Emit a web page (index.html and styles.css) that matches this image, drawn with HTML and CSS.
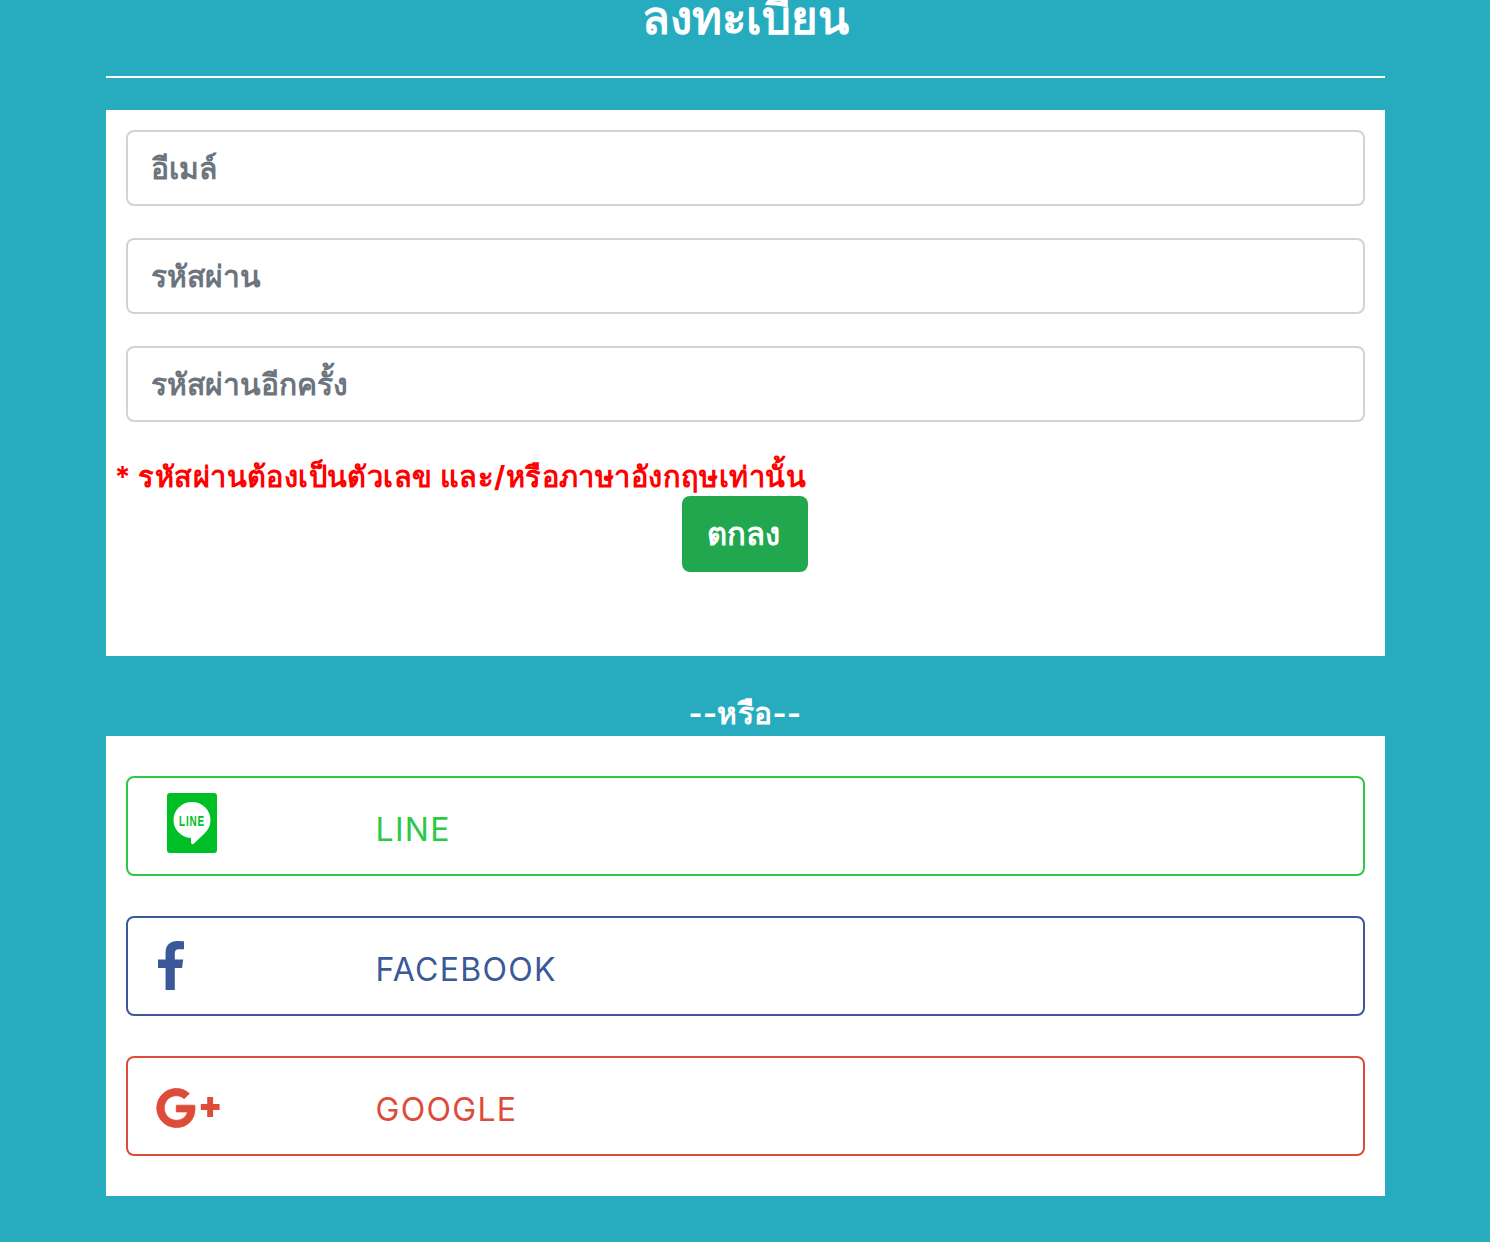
FILE: index.html
```html
<!DOCTYPE html>
<html lang="th">
<head>
    <meta charset="UTF-8">
    <meta name="viewport" content="width=device-width, initial-scale=1.0">
    <title>ลงทะเบียน</title>
    <link rel="stylesheet" href="styles.css">
</head>
<body>
<div class="container">
    <h1 class="title">ลงทะเบียน</h1>
    <hr class="divider">
    <form class="card register">
        <input class="field" type="text" placeholder="อีเมล์">
        <input class="field" type="password" placeholder="รหัสผ่าน">
        <input class="field" type="password" placeholder="รหัสผ่านอีกครั้ง">
        <p class="note">* รหัสผ่านต้องเป็นตัวเลข และ/หรือภาษาอังกฤษเท่านั้น</p>
        <button class="submit" type="button">ตกลง</button>
    </form>
    <div class="or">--หรือ--</div>
    <div class="card social">
        <a class="social-btn line" href="#">
            <span class="social-icon">
                <svg class="icon-line" width="50" height="60" viewBox="0 0 50 60">
                    <rect width="50" height="60" rx="3" fill="#00bf26"/>
                    <ellipse cx="25" cy="27" rx="18.5" ry="18" fill="#fff"/>
                    <path d="M24 43 L24 50 Q25 52 27 50.5 L38 40 Z" fill="#fff"/>
                    <text class="line-word" x="12" y="33" textLength="26" lengthAdjust="spacingAndGlyphs">LINE</text>
                </svg>
            </span>
            <span class="social-label">LINE</span>
        </a>
        <a class="social-btn facebook" href="#">
            <span class="social-icon">
                <svg class="icon-fb" width="26" height="49" viewBox="0 0 264 512" preserveAspectRatio="none">
                    <path fill="currentColor" d="M76.7 512V283H0v-91h76.7v-71.7C76.7 42.4 124.3 0 193.8 0c33.3 0 61.9 2.5 70.2 3.6V85h-48.2c-37.8 0-45.1 18-45.1 44.3V192H256l-11.7 91h-73.6v229"/>
                </svg>
            </span>
            <span class="social-label">FACEBOOK</span>
        </a>
        <a class="social-btn google" href="#">
            <span class="social-icon">
                <svg class="icon-g" width="66" height="52" viewBox="0 0 640 512">
                    <path fill="currentColor" stroke="currentColor" stroke-width="8" d="M386.061 228.496c1.834 9.692 3.143 19.384 3.143 31.956C389.204 370.205 315.599 448 204.8 448c-106.084 0-192-85.915-192-192s85.916-192 192-192c51.864 0 95.083 18.859 128.611 50.292l-52.126 50.03c-14.145-13.621-39.028-29.599-76.485-29.599-65.484 0-118.92 54.221-118.92 121.277 0 67.056 53.436 121.277 118.92 121.277 75.961 0 104.513-54.745 108.965-82.773H204.8v-66.009h181.261z"/>
                    <path fill="currentColor" d="M446 217h63v-69h58v69h64v58h-64v69h-58v-69h-63z"/>
                </svg>
            </span>
            <span class="social-label">GOOGLE</span>
        </a>
    </div>
</div>
</body>
</html>
```

FILE: styles.css
```css
html, body {
    margin: 0;
    height: 1242px;
    overflow: hidden;
}
body {
    font-family: Inter, "Noto Sans", sans-serif;
    background-color: #27abbf;
    color: #fff;
}
.container {
    width: 1279px;
    margin: 0 auto;
    box-sizing: border-box;
}
.title {
    height: 76px;
    margin: 0;
    box-sizing: border-box;
    font-size: 45.5px;
    line-height: 36px;
    font-weight: 700;
    text-align: center;
}
.divider {
    height: 2px;
    margin: 0 0 32px;
    border: none;
    background-color: #fff;
}
.card {
    background-color: #fff;
    box-sizing: border-box;
}
.register {
    height: 546px;
    padding: 20px 20px 0;
    display: flex;
    flex-direction: column;
}
.field {
    height: 76px;
    margin-bottom: 32px;
    padding: 0 23px;
    box-sizing: border-box;
    border: 2px solid #ced4da;
    border-radius: 8px;
    font-family: inherit;
    font-size: 30px;
    font-weight: 700;
    outline: none;
}
.field::placeholder {
    color: #6c757d;
    opacity: 1;
}
.note {
    margin: 0 0 0 -11px;
    height: 42px;
    padding-top: 7px;
    box-sizing: border-box;
    color: #f00;
    font-size: 29px;
    line-height: 32px;
    font-weight: 700;
    letter-spacing: 0.42px;
    white-space: nowrap;
}
.submit {
    width: 126px;
    height: 76px;
    align-self: center;
    padding: 0 4px 0 0;
    border: none;
    border-radius: 8px;
    background-color: #21a74e;
    color: #fff;
    font-family: inherit;
    font-size: 31px;
    font-weight: 600;
}
.or {
    height: 80px;
    box-sizing: border-box;
    padding-top: 37px;
    font-size: 30px;
    line-height: 40px;
    font-weight: 700;
    letter-spacing: 0.4px;
    text-align: center;
}
.social {
    height: 460px;
    padding: 40px 20px;
    display: flex;
    flex-direction: column;
    gap: 40px;
}
.social-btn {
    height: 100px;
    box-sizing: border-box;
    display: flex;
    align-items: center;
    border: 2px solid;
    border-radius: 8px;
    font-size: 32px;
    letter-spacing: 1.3px;
    text-decoration: none;
}
.social-label {
    margin-top: 6px;
}
.social-icon {
    width: 248px;
    display: flex;
    align-items: center;
}
.line { color: #2cc84a; }
.facebook { color: #3b5998; }
.google { color: #dd4b39; }
.icon-line {
    margin: -6px 0 0 39px;
}
.icon-fb {
    margin: -2px 0 0 30px;
}
.icon-g {
    margin: 4px 0 0 27px;
}
.line-word {
    font-family: "Liberation Sans", sans-serif;
    font-size: 15px;
    font-weight: 700;
    fill: #00bf26;
}
```
